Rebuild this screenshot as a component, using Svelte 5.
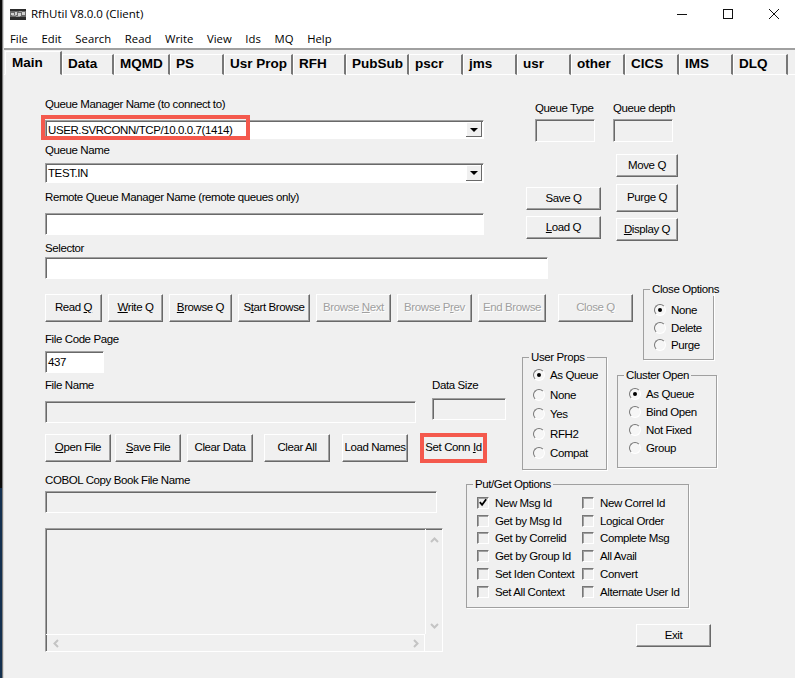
<script>
	const menus = ['File', 'Edit', 'Search', 'Read', 'Write', 'View', 'Ids', 'MQ', 'Help'];
	const tabs = ['Main', 'Data', 'MQMD', 'PS', 'Usr Prop', 'RFH', 'PubSub', 'pscr', 'jms', 'usr', 'other', 'CICS', 'IMS', 'DLQ'];
	const closeOptions = ['None', 'Delete', 'Purge'];
	const userProps = ['As Queue', 'None', 'Yes', 'RFH2', 'Compat'];
	const clusterOpen = ['As Queue', 'Bind Open', 'Not Fixed', 'Group'];
	const putGet = [
		'New Msg Id', 'New Correl Id',
		'Get by Msg Id', 'Logical Order',
		'Get by Correlid', 'Complete Msg',
		'Get by Group Id', 'All Avail',
		'Set Iden Context', 'Convert',
		'Set All Context', 'Alternate User Id'
	];
</script>

{#snippet radios(items)}
	{#each items as item, i}
		<div class="radio-row">
			<span class="radio" class:on={i === 0}></span>
			<span>{item}</span>
		</div>
	{/each}
{/snippet}

<div class="shell">
	<div class="strip"></div>
	<div class="window">
		<header class="titlebar">
			<svg class="appicon" width="16" height="11" viewBox="0 0 16 11">
				<rect width="16" height="11" fill="#2c2c2c" />
				<path d="M0 2h16v6H0z" fill="#6a6a6a" />
				<path d="M1 4h3v2H1zM5 3h2v3H5zM8 4h3v3H8zM12 3h3v3h-3z" fill="#d0d0d0" />
				<path d="M2 6h4v1H2zM9 2h3v1H9zM6 7h4v1H6z" fill="#9a9a9a" />
			</svg>
			<span class="title">RfhUtil V8.0.0 (Client)</span>
			<div class="controls">
				<svg width="12" height="12" viewBox="0 0 12 12"><path d="M1 6.5h10" stroke="#111" fill="none" /></svg>
				<svg width="12" height="12" viewBox="0 0 12 12"><rect x="1.5" y="1.5" width="9" height="9" stroke="#111" fill="none" /></svg>
				<svg width="12" height="12" viewBox="0 0 12 12"><path d="M1 1l10 10M11 1L1 11" stroke="#111" fill="none" /></svg>
			</div>
		</header>

		<nav class="menubar">
			{#each menus as m}
				<span>{m}</span>
			{/each}
		</nav>

		<div class="tabs">
			{#each tabs as t, i}
				<div class="tab" class:active={i === 0}>{t}</div>
			{/each}
		</div>

		<main class="panel">
			<section class="top">
				<div class="fields">
					<div class="label">Queue Manager Name (to connect to)</div>
					<div class="combo qm">
						<span>USER.SVRCONN/TCP/10.0.0.7(1414)</span>
						<b class="arrow"></b>
						<i class="callout"></i>
					</div>
					<div class="label qname">Queue Name</div>
					<div class="combo qn">
						<span>TEST.IN</span>
						<b class="arrow"></b>
					</div>
					<div class="label remote">Remote Queue Manager Name (remote queues only)</div>
					<div class="input remote-input"></div>
				</div>
				<div class="side">
					<div class="qinfo">
						<div class="qcol">
							<div class="label">Queue Type</div>
							<div class="sunken qbox"></div>
						</div>
						<div class="qcol">
							<div class="label">Queue depth</div>
							<div class="sunken qbox"></div>
						</div>
					</div>
					<div class="qbtns">
						<div class="save-load">
							<button>Save Q</button>
							<button><u>L</u>oad Q</button>
						</div>
						<div class="move-col">
							<button>Move Q</button>
							<button class="tall">Pur<u>g</u>e Q</button>
							<button><u>D</u>isplay Q</button>
						</div>
					</div>
				</div>
			</section>

			<div class="label">Selector</div>
			<div class="input selector"></div>

			<section class="actions-row">
				<div class="actions">
					<button>Read <u>Q</u></button>
					<button><u>W</u>rite Q</button>
					<button><u>B</u>rowse Q</button>
					<button>S<u>t</u>art Browse</button>
					<button disabled>Browse <u>N</u>ext</button>
					<button disabled>Browse P<u>r</u>ev</button>
					<button disabled>End Browse</button>
					<button disabled class="close-q">Close Q</button>
				</div>
				<fieldset class="close-options">
					<legend>Close Options</legend>
					{@render radios(closeOptions)}
				</fieldset>
			</section>

			<section class="middle">
				<div class="file-col">
					<div class="label">File Code Page</div>
					<div class="input codepage">437</div>
					<div class="file-row">
						<div>
							<div class="label">File Name</div>
							<div class="sunken filename"></div>
						</div>
						<div class="datasize">
							<div class="label">Data Size</div>
							<div class="sunken sizebox"></div>
						</div>
					</div>
					<div class="file-btns">
						<button><u>O</u>pen File</button>
						<button><u>S</u>ave File</button>
						<button>Clear Data</button>
						<button>Clear All</button>
						<button>Load Names</button>
						<button class="conn">Set Conn <u>I</u>d</button>
					</div>
				</div>
				<fieldset class="user-props">
					<legend>User Props</legend>
					{@render radios(userProps)}
				</fieldset>
				<fieldset class="cluster">
					<legend>Cluster Open</legend>
					{@render radios(clusterOpen)}
				</fieldset>
			</section>

			<section class="bottom">
				<div class="cobol">
					<div class="label">COBOL Copy Book File Name</div>
					<div class="sunken cobol-input"></div>
					<div class="sunken textarea">
						<div class="vbar">
							<svg width="9" height="6" viewBox="0 0 9 6"><path d="M1 5l3.5-3.5L8 5" /></svg>
							<svg width="9" height="6" viewBox="0 0 9 6"><path d="M1 1l3.5 3.5L8 1" /></svg>
						</div>
						<div class="hbar">
							<svg width="6" height="9" viewBox="0 0 6 9"><path d="M5 1L1.5 4.5 5 8" /></svg>
							<svg width="6" height="9" viewBox="0 0 6 9"><path d="M1 1l3.5 3.5L1 8" /></svg>
						</div>
					</div>
				</div>
				<div class="options-col">
					<fieldset class="putget">
						<legend>Put/Get Options</legend>
						<div class="checks">
							{#each putGet as c, i}
								<div class="check-row">
									<span class="check">
										{#if i === 0}
											<svg width="11" height="11" viewBox="0 0 11 11"><path d="M2 5l2.5 3L9 2" /></svg>
										{/if}
									</span>
									<span>{c}</span>
								</div>
							{/each}
						</div>
					</fieldset>
					<button class="exit">Exit</button>
				</div>
			</section>
		</main>
	</div>
</div>

<style>
	:global(body) {
		margin: 0;
		background: #f0f0f0;
	}

	.shell {
		display: flex;
		width: 795px;
		height: 678px;
		overflow: hidden;
		font-family: 'Liberation Sans', Arial, sans-serif;
		font-size: 11.5px;
		letter-spacing: -0.4px;
		line-height: 14px;
		color: #000;
	}

	.strip {
		flex: none;
		width: 4px;
		background: linear-gradient(90deg, #161616 0 2px, #7d7d7d 2px 3px, #d8d8d8 3px);
	}

	.strip::before {
		content: '';
		display: block;
		width: 2px;
		height: 678px;
		background: linear-gradient(180deg, #0c0c0c 0 488px, #14304f 488px);
	}

	.window {
		flex: 1;
		display: flex;
		flex-direction: column;
		min-width: 0;
	}

	.titlebar {
		display: flex;
		align-items: center;
		height: 28px;
		padding-left: 6px;
		background: #fff;
	}

	.appicon {
		margin-right: 5px;
	}

	.title {
		font-family: 'Open Sans', sans-serif;
		font-size: 11.5px;
		letter-spacing: 0;
	}

	.controls {
		margin-left: auto;
		display: flex;
		gap: 34px;
		padding-right: 15px;
	}

	.menubar {
		display: flex;
		height: 20px;
		align-items: center;
		gap: 13.7px;
		padding: 1px 0 0 6px;
		box-sizing: border-box;
		background: #fff;
		font-family: 'Open Sans', sans-serif;
		font-size: 11.3px;
		letter-spacing: 0;
	}

	.tabs {
		display: grid;
		grid-template-columns: 57px 52px 56px 54px 69px 53px 63px 54px 54px 54px 54px 54px 54px 55px;
		align-items: end;
		height: 27px;
		padding-left: 1px;
		background: #f0f0f0;
		border-top: 2px solid #a0a0a0;
		box-sizing: border-box;
		box-shadow: inset 0 -1px 0 #fff;
	}

	.tab {
		height: 21px;
		box-sizing: border-box;
		padding: 2px 0 0 5px;
		font-size: 13.5px;
		letter-spacing: 0;
		font-weight: bold;
		border-left: 1px solid #fff;
		border-top: 1px solid #fff;
		border-right: 2px solid #777;
		border-bottom: 1px solid #fff;
	}

	.tab.active {
		height: 24px;
		padding: 4px 0 0 6px;
		border-bottom-color: #f0f0f0;
	}

	.panel {
		flex: 1;
		padding: 22px 0 0 41px;
		background: #f0f0f0;
	}

	.label {
		white-space: nowrap;
	}

	.top {
		display: flex;
		height: 144px;
	}

	.fields {
		width: 439px;
	}

	.sunken,
	.input,
	.combo {
		box-sizing: border-box;
		border: 1px solid;
		border-color: #a0a0a0 #fff #fff #a0a0a0;
		box-shadow: inset 1px 1px 0 #696969;
	}

	.input,
	.combo {
		background: #fff;
		padding: 2px 0 0 2px;
	}

	.combo {
		position: relative;
		display: flex;
	}

	.qm {
		margin-top: 9px;
		height: 19px;
	}

	.qname {
		margin-top: 4px;
	}

	.qn {
		margin-top: 6px;
		height: 20px;
	}

	.arrow {
		position: absolute;
		right: 1px;
		top: 1px;
		bottom: 1px;
		width: 16px;
		background: #f0f0f0;
		border-right: 1px solid #696969;
		border-bottom: 1px solid #696969;
		box-shadow: inset 1px 1px 0 #fff;
		box-sizing: border-box;
	}

	.arrow::after {
		content: '';
		position: absolute;
		left: 4px;
		top: 6px;
		border: 4px solid transparent;
		border-top: 4px solid #000;
		border-bottom: 0;
	}

	.callout {
		position: absolute;
		left: -5px;
		top: -6px;
		width: 209px;
		height: 25px;
		box-sizing: border-box;
		border: 4px solid #f4594d;
	}

	.remote {
		margin-top: 7px;
	}

	.remote-input {
		margin-top: 9px;
		height: 22px;
	}

	.side {
		margin-left: 42px;
		margin-top: 4px;
	}

	.qinfo {
		display: flex;
		gap: 18px;
		padding-left: 9px;
	}

	.qcol {
		width: 60px;
	}

	.qbox {
		margin-top: 4px;
		width: 60px;
		height: 23px;
	}

	.qbtns {
		display: flex;
		gap: 15px;
		margin-top: 12px;
	}

	.save-load,
	.move-col {
		display: flex;
		flex-direction: column;
	}

	.save-load {
		width: 75px;
		padding-top: 33px;
		gap: 6px;
	}

	.move-col {
		width: 62px;
		gap: 6.5px;
	}

	button {
		height: 23px;
		padding: 0 0 2px;
		box-sizing: border-box;
		font: inherit;
		letter-spacing: inherit;
		color: #000;
		white-space: nowrap;
		background: #f0f0f0;
		border: 1px solid;
		border-color: #fff #696969 #696969 #fff;
		border-radius: 0;
		box-shadow: inset -1px -1px 0 #a0a0a0;
	}

	button:disabled {
		color: #a0a0a0;
		text-shadow: 1px 1px 0 #fff;
	}

	.tall {
		height: 28px;
	}

	.selector {
		margin-top: 2px;
		width: 503px;
		height: 22px;
	}

	.actions-row {
		display: flex;
		margin-top: 3px;
		height: 40px;
	}

	.actions {
		display: grid;
		grid-template-columns: 57px 55px 63px 72px 75px 75px 68px 81px;
		column-gap: 6px;
		margin-top: 12px;
		height: 28px;
	}

	.actions button,
	.file-btns button {
		height: 28px;
	}

	.close-q {
		margin-left: 6px;
	}

	fieldset {
		margin: 0;
		padding: 0;
		box-sizing: border-box;
		min-width: 0;
		border: 1px solid #a0a0a0;
		box-shadow: 1px 1px 0 #fff;
	}

	legend {
		margin-left: 6px;
		padding: 0 2px;
		line-height: 14px;
		white-space: nowrap;
	}

	.close-options {
		flex: none;
		margin-left: 10px;
		width: 71px;
		height: 78px;
		padding-top: 7px;
	}

	.radio-row {
		display: flex;
		align-items: center;
		gap: 5px;
		height: 14px;
		margin: 0 0 3.5px 10px;
		white-space: nowrap;
	}

	.radio {
		position: relative;
		flex: none;
		width: 12px;
		height: 12px;
		box-sizing: border-box;
		border-radius: 50%;
		border: 1px solid;
		border-color: #777 #fff #fff #777;
		background: #f6f6f6;
	}

	.radio.on::after {
		content: '';
		position: absolute;
		left: 3px;
		top: 3px;
		width: 4px;
		height: 4px;
		border-radius: 50%;
		background: #000;
	}

	.middle {
		display: flex;
		height: 148px;
		align-items: flex-start;
	}

	.file-col {
		width: 477px;
		flex: none;
		padding-top: 10px;
	}

	.codepage {
		margin-top: 5px;
		width: 59px;
		height: 22px;
		padding-top: 3px;
	}

	.file-row {
		display: flex;
		gap: 16px;
		margin-top: 5px;
	}

	.filename {
		margin-top: 9px;
		width: 371px;
		height: 22px;
	}

	.sizebox {
		margin-top: 6px;
		width: 74px;
		height: 22px;
	}

	.file-btns {
		display: grid;
		grid-template-columns: 66px 66px 66px 66px 66px 67px;
		margin-top: 11px;
		height: 28px;
	}

	.file-btns button:nth-child(2) {
		margin-left: 4px;
		width: 66px;
	}

	.file-btns button:nth-child(3) {
		margin-left: 10px;
		width: 66px;
	}

	.file-btns button:nth-child(4) {
		margin-left: 21px;
		width: 66px;
	}

	.file-btns button:nth-child(5) {
		margin-left: 33px;
		width: 66px;
	}

	.file-btns .conn {
		margin-left: 45px;
		margin-top: -1px;
		height: 30px;
		width: 67px;
		background: transparent;
		box-shadow: none;
		border: 4px solid #f4594d;
	}

	.user-props {
		flex: none;
		margin-top: 28px;
		width: 85px;
		height: 120px;
		padding-top: 4px;
	}

	.user-props .radio-row {
		margin-bottom: 5.5px;
	}

	.cluster {
		flex: none;
		margin: 46px 0 0 10px;
		width: 100px;
		height: 100px;
		padding-top: 5px;
	}

	.cluster .radio-row {
		margin: 0 0 4px 11px;
	}

	.bottom {
		display: flex;
	}

	.cobol {
		width: 421px;
		flex: none;
		padding-top: 3px;
	}

	.cobol-input {
		margin-top: 4px;
		width: 392px;
		height: 22px;
	}

	.textarea {
		position: relative;
		margin-top: 15px;
		width: 398px;
		height: 124px;
	}

	.vbar,
	.hbar {
		position: absolute;
		display: flex;
		justify-content: space-between;
		align-items: center;
	}

	.vbar {
		flex-direction: column;
		right: 0;
		top: 0;
		bottom: 17px;
		width: 17px;
		padding: 8px 0 5px;
		box-sizing: border-box;
		border-left: 1px solid #fff;
	}

	.hbar {
		left: 0;
		right: 17px;
		bottom: 0;
		height: 17px;
		padding: 0 5px 0 7px;
		border-top: 1px solid #fff;
		box-sizing: border-box;
		border-right: 1px solid #fff;
	}

	.vbar svg path,
	.hbar svg path {
		fill: none;
		stroke: #c4c4c4;
		stroke-width: 2;
	}

	.options-col {
		display: flex;
		flex-direction: column;
		align-items: flex-start;
		padding-top: 7px;
	}

	.putget {
		width: 223px;
		height: 131px;
		padding: 3px 0 0 10px;
	}

	.putget legend {
		margin-left: -4px;
	}

	.checks {
		display: grid;
		grid-template-columns: 105px 1fr;
	}

	.check-row {
		display: flex;
		align-items: center;
		gap: 6px;
		height: 17.8px;
		white-space: nowrap;
	}

	.check {
		flex: none;
		width: 12px;
		height: 12px;
		box-sizing: border-box;
		border: 1px solid;
		border-color: #777 #fff #fff #777;
		box-shadow: inset 1px 1px 0 #a0a0a0;
		display: flex;
		align-items: center;
		justify-content: center;
	}

	.check svg path {
		fill: none;
		stroke: #000;
		stroke-width: 2;
	}

	.exit {
		margin: 16px 0 0 170px;
		width: 75px;
	}
</style>
